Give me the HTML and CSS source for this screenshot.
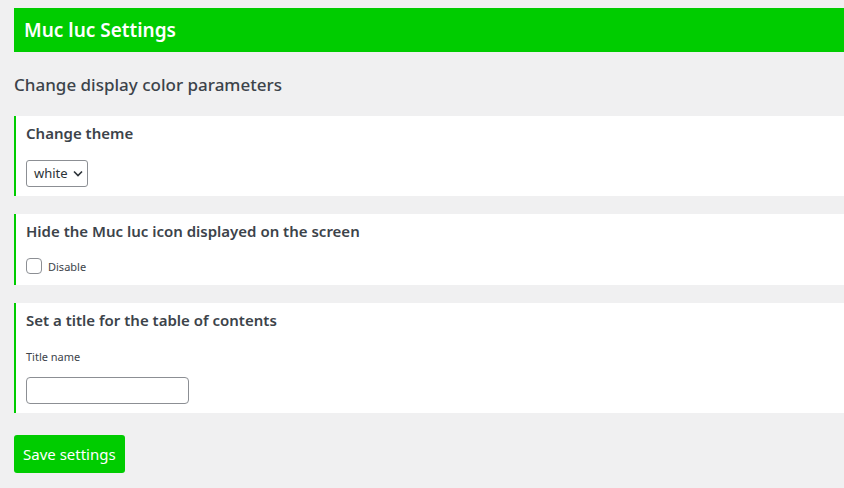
FILE: index.html
```html
<!DOCTYPE html>
<html>
<head>
<meta charset="utf-8">
<link rel="stylesheet" href="styles.css">
</head>
<body>
<div class="wrap">
  <h1 class="banner">Muc luc Settings</h1>
  <h2 class="subtitle">Change display color parameters</h2>
  <section class="card card-theme">
    <h3 class="card-title">Change theme</h3>
    <div class="select">white <svg class="chev" width="10" height="7" viewBox="0 0 10 7"><path d="M1 1.5 L5 5.5 L9 1.5" fill="none" stroke="#2c3338" stroke-width="1.6"/></svg></div>
  </section>
  <section class="card card-hide">
    <h3 class="card-title">Hide the Muc luc icon displayed on the screen</h3>
    <label class="check"><span class="box"></span><span class="check-text">Disable</span></label>
  </section>
  <section class="card card-title-set">
    <h3 class="card-title">Set a title for the table of contents</h3>
    <div class="field-label">Title name</div>
    <div class="input"></div>
  </section>
  <button class="save">Save settings</button>
</div>
</body>
</html>
```
FILE: styles.css
```css
html, body { margin: 0; padding: 0; }
body {
  background: #f0f0f1;
  font-family: "Noto Sans", "Open Sans", sans-serif;
  color: #3c434a;
  width: 844px;
  height: 488px;
  overflow: hidden;
}
.wrap {
  padding: 8px 0 0 14px;
  display: flex;
  flex-direction: column;
  align-items: flex-start;
}
.banner {
  margin: 0;
  align-self: stretch;
  background: #00cc00;
  color: #fff;
  font-size: 19px;
  font-weight: 600;
  height: 44px;
  line-height: 44px;
  padding-left: 10px;
  box-sizing: border-box;
}
.subtitle {
  margin: 20px 0 0 0;
  font-size: 17px;
  font-weight: 500;
  line-height: 26px;
  color: #3c434a;
}
.card {
  align-self: stretch;
  background: #fff;
  border-left: 2px solid #00cc00;
  padding: 6px 10px 9px 10px;
  display: flex;
  flex-direction: column;
  align-items: flex-start;
}
.card-theme { margin-top: 18px; }
.card-hide { margin-top: 18px; padding-bottom: 10px; }
.card-title-set { margin-top: 18px; padding-bottom: 9px; }
.card-title {
  margin: 0;
  font-size: 15px;
  font-weight: 600;
  line-height: 22px;
  color: #3c434a;
}
.select {
  margin-top: 16px;
  height: 27px;
  width: 62px;
  box-sizing: border-box;
  border: 1px solid #8c8f94;
  border-radius: 3px;
  font-size: 13px;
  line-height: 25px;
  padding-left: 7px;
  color: #2c3338;
  display: flex;
  align-items: center;
  gap: 5px;
}
.check {
  margin-top: 14px;
  display: flex;
  align-items: center;
  gap: 6px;
}
.box {
  width: 16px;
  height: 16px;
  box-sizing: border-box;
  border: 1px solid #8c8f94;
  border-radius: 4px;
  background: #fff;
}
.check-text { font-size: 11px; line-height: 16px; margin-top: 3px; }
.field-label {
  margin-top: 18px;
  font-size: 11px;
  line-height: 16px;
}
.input {
  margin-top: 12px;
  width: 163px;
  height: 27px;
  box-sizing: border-box;
  border: 1px solid #8c8f94;
  border-radius: 4px;
  background: #fff;
}
.save {
  margin-top: 22px;
  background: #00cc00;
  color: #fff;
  border: none;
  border-radius: 3px;
  height: 38px;
  padding: 0 9px;
  font-family: "Noto Sans", "Open Sans", sans-serif;
  font-size: 15px;
}
```
